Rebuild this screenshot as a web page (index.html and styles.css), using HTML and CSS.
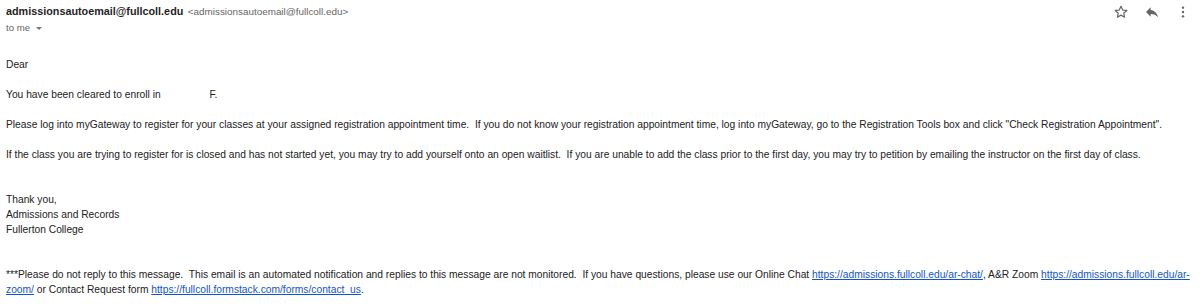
FILE: index.html
```html
<!DOCTYPE html>
<html>
<head>
<meta charset="utf-8">
<link rel="stylesheet" href="styles.css">
</head>
<body>
<div class="mail">
  <div class="head">
    <div class="from">
      <div class="sender"><span class="name">admissionsautoemail@fullcoll.edu</span> <span class="addr">&lt;admissionsautoemail@fullcoll.edu&gt;</span></div>
      <div class="to">to me <span class="caret"></span></div>
    </div>
    <div class="actions">
      <svg class="ic" width="16" height="16" viewBox="0 0 24 24"><path d="M12 3.5l2.6 5.6 6.1.6-4.6 4.1 1.3 6L12 16.7 6.6 19.8l1.3-6-4.6-4.1 6.1-.6z" fill="none" stroke="#666" stroke-width="1.8" stroke-linejoin="round"/></svg>
      <svg class="ic" width="16" height="16" viewBox="0 0 24 24"><path d="M10 9V5l-7 7 7 7v-4.1c5 0 8.5 1.6 11 5.1-1-5-4-10-11-11z" fill="#666"/></svg>
      <svg class="ic" width="16" height="16" viewBox="0 0 24 24"><circle cx="12" cy="5.5" r="1.8" fill="#666"/><circle cx="12" cy="12" r="1.8" fill="#666"/><circle cx="12" cy="18.5" r="1.8" fill="#666"/></svg>
    </div>
  </div>
  <div class="body">
    <div>Dear</div>
    <div class="blank"></div>
    <div>You have been cleared to enroll in <span class="redact"></span>F.</div>
    <div class="blank"></div>
    <div>Please log into myGateway to register for your classes at your assigned registration appointment time.&nbsp; If you do not know your registration appointment time, log into myGateway, go to the Registration Tools box and click "Check Registration Appointment".</div>
    <div class="blank"></div>
    <div>If the class you are trying to register for is closed and has not started yet, you may try to add yourself onto an open waitlist.&nbsp; If you are unable to add the class prior to the first day, you may try to petition by emailing the instructor on the first day of class.</div>
    <div class="blank"></div>
    <div class="blank"></div>
    <div>Thank you,</div>
    <div>Admissions and Records</div>
    <div>Fullerton College</div>
    <div class="blank"></div>
    <div class="blank"></div>
    <div>***Please do not reply to this message.&nbsp; This email is an automated notification and replies to this message are not monitored.&nbsp; If you have questions, please use our Online Chat <a href="#">https://admissions.fullcoll.edu/ar-chat/</a>, A&amp;R Zoom <a href="#">https://admissions.fullcoll.edu/ar-</a><a href="#">zoom/</a> or Contact Request form <a href="#">https://fullcoll.formstack.com/forms/contact_us</a>.</div>
  </div>
</div>
</body>
</html>
```
FILE: styles.css
```css
html, body {
  margin: 0;
  padding: 0;
  background: #fff;
}
.mail {
  font-family: "Liberation Sans", Arial, sans-serif;
  color: #222;
  padding: 2px 6px 0 6px;
}
.head {
  display: flex;
  justify-content: space-between;
  align-items: flex-start;
}
.sender {
  line-height: 16px;
}
.name {
  font-weight: bold;
  font-size: 10.8px;
  color: #1f1f1f;
}
.addr {
  font-size: 9.9px;
  color: #666;
}
.to {
  font-size: 9.6px;
  color: #666;
  line-height: 14px;
  margin-top: 1px;
}
.caret {
  display: inline-block;
  width: 0;
  height: 0;
  border-left: 3px solid transparent;
  border-right: 3px solid transparent;
  border-top: 3px solid #777;
  vertical-align: middle;
  margin-left: 3px;
}
.actions {
  display: flex;
  gap: 15px;
  padding-top: 2px;
  padding-right: 3px;
}
.ic {
  display: block;
}
.body {
  margin-top: 22px;
  font-size: 10.25px;
  line-height: 15px;
}
.blank {
  height: 15px;
}
.redact {
  display: inline-block;
  width: 46px;
}
a {
  color: #1155cc;
  text-decoration: underline;
}
```
